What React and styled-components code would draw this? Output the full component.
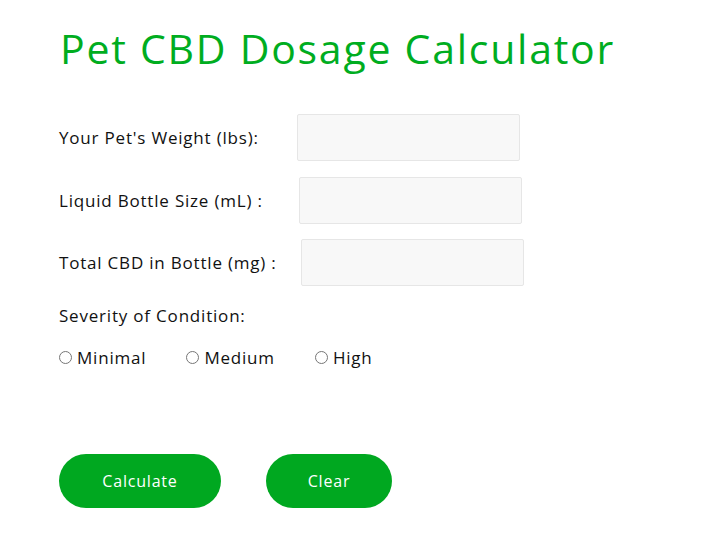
import styled, { createGlobalStyle } from "styled-components";

const GlobalStyle = createGlobalStyle`
  body {
    margin: 0;
    background: #fff;
    font-family: "Open Sans", "Noto Sans", sans-serif;
  }
`;

const Page = styled.div`
  padding: 22px 59px 0 59px;
`;

const Title = styled.h1`
  margin: 0 0 40px 1px;
  color: #00ad1f;
  font-size: 41px;
  font-weight: 400;
  letter-spacing: 1.75px;
  line-height: 52px;
`;

const Row = styled.div`
  display: flex;
  align-items: center;
  height: 47px;
  margin-bottom: 15.5px;
`;

const Text = `
  font-size: 17px;
  letter-spacing: 0.8px;
  color: #111;
`;

const Label = styled.label`
  ${Text}
  width: ${(p) => p.$width}px;
  flex: none;
`;

const Input = styled.input`
  box-sizing: border-box;
  width: 223px;
  height: 47px;
  background: #f8f8f8;
  border: 1px solid #e6e6e6;
  border-radius: 2px;
  outline: none;
`;

const Heading = styled.div`
  ${Text}
  margin-top: 18px;
`;

const Options = styled.div`
  display: flex;
  margin-top: 19px;
  gap: 40px;
`;

const Option = styled.label`
  ${Text}
  display: flex;
  align-items: center;

  input {
    margin: 0 5px 0 0;
    width: 13px;
    height: 13px;
  }
`;

const Buttons = styled.div`
  display: flex;
  gap: 45px;
  margin-top: 85px;
`;

const Button = styled.button`
  width: ${(p) => p.$width}px;
  height: 54px;
  border: none;
  border-radius: 27px;
  background: #00a820;
  color: #fff;
  font-family: inherit;
  font-size: 16px;
  letter-spacing: 0.8px;
  cursor: pointer;
`;

function App() {
  return (
    <Page>
      <GlobalStyle />
      <Title>Pet CBD Dosage Calculator</Title>
      <Row>
        <Label $width={238}>Your Pet's Weight (lbs):</Label>
        <Input type="text" />
      </Row>
      <Row>
        <Label $width={240}>Liquid Bottle Size (mL) :</Label>
        <Input type="text" />
      </Row>
      <Row>
        <Label $width={242}>Total CBD in Bottle (mg) :</Label>
        <Input type="text" />
      </Row>
      <Heading>Severity of Condition:</Heading>
      <Options>
        <Option>
          <input type="radio" name="severity" />
          Minimal
        </Option>
        <Option>
          <input type="radio" name="severity" />
          Medium
        </Option>
        <Option>
          <input type="radio" name="severity" />
          High
        </Option>
      </Options>
      <Buttons>
        <Button $width={162}>Calculate</Button>
        <Button $width={126}>Clear</Button>
      </Buttons>
    </Page>
  );
}

export default App;
